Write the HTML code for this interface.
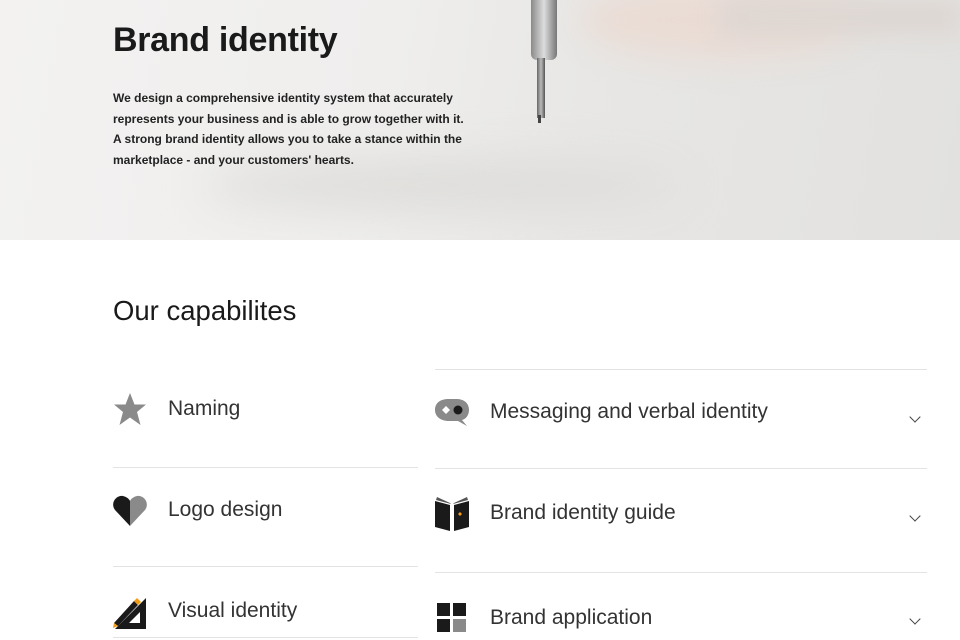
<!DOCTYPE html>
<html><head><meta charset="utf-8"><style>
body{margin:0;width:960px;height:640px;overflow:hidden;background:#fff;font-family:"Liberation Sans",sans-serif;color:#1a1a1a;position:relative}
.hero{position:absolute;left:0;top:0;width:960px;height:240px;background:linear-gradient(100deg,#f3f2f1 0%,#efeeed 40%,#e8e7e5 60%,#e2e1df 100%);overflow:hidden}
.h1{position:absolute;left:113px;top:21px;font-size:34px;font-weight:bold;letter-spacing:-0.3px}
.p{position:absolute;left:113px;top:88px;font-size:12px;line-height:20.5px;font-weight:bold;color:#222;width:352px}
h2{position:absolute;left:113px;top:295px;margin:0;font-size:27.5px;font-weight:normal}
.line{position:absolute;height:1px;background:#e3e3e3}
.t{position:absolute;font-size:21px;color:#333}
.chev{position:absolute;width:7px;height:7px;border-right:1.3px solid #444;border-bottom:1.3px solid #444;transform:rotate(45deg)}
svg{position:absolute}
</style></head><body>
<div class="hero">
<div style="position:absolute;left:580px;top:-20px;width:280px;height:80px;border-radius:50%;background:#eadcd5;filter:blur(16px)"></div>
<div style="position:absolute;left:720px;top:0;width:240px;height:35px;background:#ddd6d2;filter:blur(12px)"></div>
<div style="position:absolute;left:200px;top:160px;width:480px;height:50px;border-radius:50%;background:#dddcda;filter:blur(22px)"></div>
<div style="position:absolute;left:531px;top:0;width:26px;height:60px;background:linear-gradient(90deg,#8a8a8a,#ddd,#777);border-radius:0 0 6px 6px"></div>
<div style="position:absolute;left:537px;top:58px;width:8px;height:60px;background:linear-gradient(90deg,#666,#bbb,#555)"></div>
<div style="position:absolute;left:538px;top:115px;width:3px;height:8px;background:#444"></div>
<div class="h1">Brand identity</div>
<div class="p">We design a comprehensive identity system that accurately represents your business and is able to grow together with it. A strong brand identity allows you to take a stance within the marketplace - and your customers' hearts.</div>
</div>
<h2>Our capabilites</h2>
<div class="line" style="left:435px;top:369px;width:492px"></div>
<div class="line" style="left:113px;top:467px;width:305px"></div>
<div class="line" style="left:435px;top:468px;width:492px"></div>
<div class="line" style="left:113px;top:566px;width:305px"></div>
<div class="line" style="left:435px;top:572px;width:492px"></div>
<div class="line" style="left:113px;top:637px;width:305px"></div>

<svg style="left:112px;top:392px" width="36" height="36" viewBox="0 0 36 36"><polygon points="18,1 22.5,12.5 34,12.5 25,20 28.5,33 18,25.5 7.5,33 11,20 2,12.5 13.5,12.5" fill="#8a8a8a"/></svg>
<div class="t" style="left:168px;top:397px">Naming</div>
<svg style="left:112px;top:495px" width="36" height="32" viewBox="0 0 36 32"><path d="M18 31 L3 15 C-2 8 4 0 11 1 C15 2 17 4 18 6 Z" fill="#1a1a1a"/><path d="M18 31 L33 15 C38 8 32 0 25 1 C21 2 19 4 18 6 Z" fill="#8a8a8a"/></svg>
<div class="t" style="left:168px;top:498px">Logo design</div>
<svg style="left:112px;top:595px" width="36" height="36" viewBox="0 0 36 36"><path d="M34 3 L34 34 L3 34 Z M28 17 L17 28 L28 28 Z" fill="#1a1a1a" fill-rule="evenodd"/><path d="M2 28 L22 6 L26 10 L6 31 Z" fill="#1a1a1a"/><path d="M22 6 L25 3 L29 7 L26 10 Z" fill="#f39c12"/><path d="M2 28 L6 31 L1 33 Z" fill="#f39c12"/></svg>
<div class="t" style="left:168px;top:599px">Visual identity</div>

<svg style="left:434px;top:398px" width="36" height="30" viewBox="0 0 36 30"><path d="M15 1 H22 C30 1 35 5 35 12 C35 17 32 21 28 22 L33 28 L24 23 H15 C6 23 1 18 1 12 C1 5 6 1 15 1 Z" fill="#8a8a8a"/><path d="M8 12 L12 8 L16 12 L12 16 Z" fill="#fff"/><circle cx="24" cy="12" r="4.5" fill="#1a1a1a"/></svg>
<div class="t" style="left:490px;top:400px">Messaging and verbal identity</div>
<div class="chev" style="left:911px;top:413px"></div>
<svg style="left:434px;top:496px" width="36" height="36" viewBox="0 0 36 36"><path d="M1 5 L16 9 L16 35 L1 31 Z" fill="#1a1a1a"/><path d="M35 5 L20 9 L20 35 L35 31 Z" fill="#1a1a1a"/><path d="M3 1 L16 7 L17 8 L2 4 Z" fill="#555"/><path d="M33 1 L20 7 L19 8 L34 4 Z" fill="#555"/><path d="M26 16 L28 18 L26 20 L24 18 Z" fill="#f39c12"/></svg>
<div class="t" style="left:490px;top:501px">Brand identity guide</div>
<div class="chev" style="left:911px;top:512px"></div>
<svg style="left:437px;top:603px" width="30" height="30" viewBox="0 0 30 30"><rect x="0" y="0" width="13" height="13" fill="#1a1a1a"/><rect x="16" y="0" width="13" height="13" fill="#1a1a1a"/><rect x="0" y="16" width="13" height="13" fill="#1a1a1a"/><rect x="16" y="16" width="13" height="13" fill="#8a8a8a"/></svg>
<div class="t" style="left:490px;top:606px">Brand application</div>
<div class="chev" style="left:911px;top:615px"></div>
</body></html>
